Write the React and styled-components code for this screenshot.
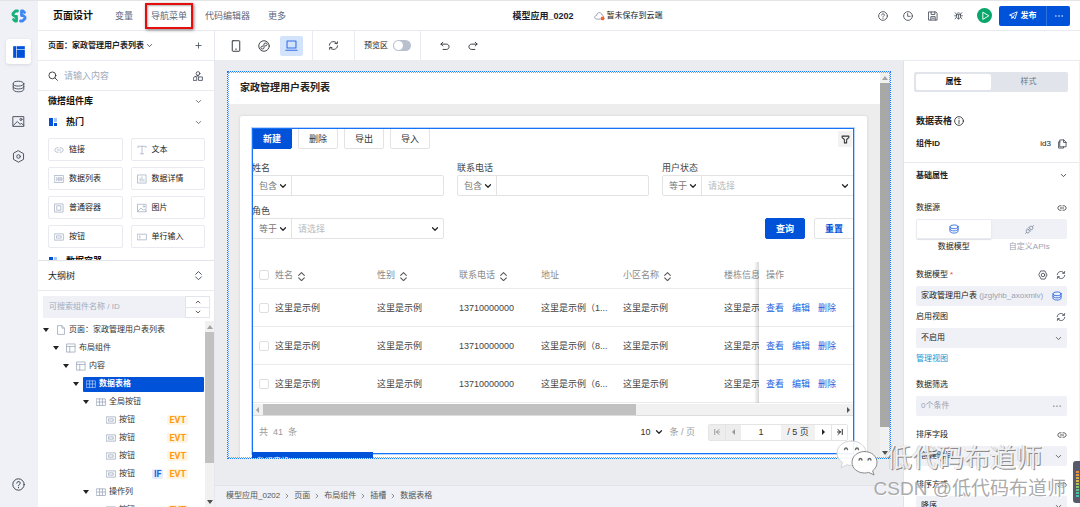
import React from 'react';
import styled, { createGlobalStyle, css } from 'styled-components';

const GlobalStyle = createGlobalStyle`
  *, *::before, *::after { box-sizing: border-box; }
  html, body { margin: 0; padding: 0; }
  body {
    font-family: "Liberation Sans", "Noto Sans CJK SC", sans-serif;
    font-size: 8px;
    line-height: 12px;
    color: #222;
    background: #fff;
    overflow: hidden;
  }
  button, input, select {
    font: inherit;
    color: inherit;
    margin: 0;
    padding: 0;
    border: 0;
    background: none;
    border-radius: 0;
    outline: none;
  }
  button { cursor: pointer; display: inline-flex; align-items: center; justify-content: center; white-space: nowrap; }
  ul, ol { list-style: none; margin: 0; padding: 0; }
  h1, h2, h3 { margin: 0; font: inherit; }
  a { color: inherit; text-decoration: none; }
`;

/* ---------- icons ---------- */

const Svg = styled.svg`
  display: block;
  flex: none;
  fill: none;
  stroke: currentColor;
  stroke-linecap: round;
  stroke-linejoin: round;
`;

const PATHS = {
  down: <path d="M3 5.500l5 5 5-5" />,
  up: <path d="M3 10.500l5-5 5 5" />,
  right: <path d="M5.500 3l5 5-5 5" />,
  plus: <path d="M8 2v12M2 8h12" />,
  search: <><circle cx="7" cy="7" r="5.500" /><path d="M11 11l4 4" /></>,
  shapes: <><circle cx="8" cy="4" r="3" /><path d="M8 7L3.500 9.500M1 10.500l2.500-2 2.500 2V15H1zM9.500 9.500H15V15H9.500zM8 7v2" /></>,
  database: <><ellipse cx="8" cy="4.500" rx="6.500" ry="3" /><path d="M1.500 4.500v3.500c0 1.700 2.900 3 6.500 3s6.500-1.300 6.500-3V4.500M1.500 8v3.500c0 1.700 2.900 3 6.500 3s6.500-1.300 6.500-3V8" /></>,
  image: <><path d="M1.500 2h13v12h-13zM1.500 13l5-5 3.500 3.500 1.500-1.500 3 3" /><circle cx="11" cy="5.500" r="1.300" /></>,
  hex: <><path d="M8 1l6.200 3.500v7L8 15l-6.200-3.500v-7z" /><circle cx="8" cy="8" r="2.200" /></>,
  help: <><circle cx="8" cy="8" r="7" /><path d="M5.800 6.300C5.900 3.700 10.200 3.800 10.200 6.200c0 1.700-2.200 1.700-2.200 3.300M8 11.500v.5" /></>,
  clock: <><circle cx="8" cy="8" r="7" /><path d="M7.500 4v4.500h4" /></>,
  save: <><path d="M1.500 1.500h11l2 2v11h-13zM5 1.500v4h6v-4M4.500 14.500V9h7v5.500M6.500 11.500h3" /></>,
  bug: <><path d="M4.500 6.500C4.500 2 11.500 2 11.500 6.500v4c0 4.700-7 4.700-7 0zM4.500 6.500h7M8 7v7M1 8.500h3.500M11.500 8.500H15M4.500 11L2 14M11.500 11l2.500 3M4.500 6L2 3M11.500 6L14 3" /></>,
  play: <path d="M4.500 2.500v11l9-5.500z" />,
  send: <path d="M1.500 7L14.500 1.500 10.500 14 7 10.500 5 13.500V9zM7 10.500l3.500-4" />,
  dots: <path d="M3 8h.01M8 8h.01M13 8h.01" />,
  phone: <><rect x="3" y="1" width="10" height="14" rx="1" /><path d="M7.500 12.200h1" /></>,
  mini: <><circle cx="8" cy="8" r="7" /><path d="M6.300 8C3 8 3 12 5.800 12 8.800 12 8 9.500 8 8s-.8-4 2.200-4C13 4 13 8 9.700 8" /></>,
  laptop: <path d="M2.500 2.500h11v8.500h-11zM1 13.800h14" />,
  refresh: <path d="M2 7.500C2.500 1.500 10.500.5 13 5M14 8.500c-.5 6-8.500 7-11 2.500M13.800 2.500L13.200 5.500l-3-.5M2.200 13.500l.6-3 3 .5" />,
  undo: <path d="M4.500 2L1.500 5l3 3M1.500 5H10c6 0 6 8.500 0 8.500H5" />,
  redo: <path d="M11.500 2l3 3-3 3M14.500 5H6c-6 0-6 8.500 0 8.500h5" />,
  info: <><circle cx="8" cy="8" r="7" /><path d="M8 7v5M8 4.200v.3" /></>,
  copy: <path d="M5 1.500h6l3.500 3.500v7.500H5zM10.500 1.500v4h4M5 4.500H2.500v10h8v-2" />,
  link: <path d="M6.500 11.500H5c-4.700 0-4.700-7 0-7h1.500M9.500 4.500H11c4.700 0 4.700 7 0 7H9.500M5.500 8h5" />,
  plug: <path d="M7 4.500l4.500 4.500 1.500-1.500c3-3-1.500-7.500-4.500-4.500zM4.500 7L9 11.500 7.500 13c-3 3-7.500-1.500-4.500-4.500zM6 8.500l2-2M8 10.500l2-2M13 3l2-2M3 13l-2 2" />,
  gear: <><path d="M5 1.500h6L14.500 8 11 14.500H5L1.500 8z" /><circle cx="8" cy="8" r="2.800" /></>,
  funnel: <path d="M2 2h12v2.500L10 8V14H6V8L2 4.500z" />,
  sort: <path d="M3 6l5-5 5 5M3 10.500l5 5 5-5" />,
  text: <path d="M1.500 4V2h13v2M8 2v12M5.500 14h5" />,
  list: <><rect x="1" y="2.500" width="14" height="11" /><path d="M3.500 6h1M3.500 8h1M3.500 10h1M7 6h5.500v4H7zM7 8h5.500" /></>,
  chart: <><rect x="1.500" y="1.500" width="13" height="13" /><path d="M5 11.500V7M8 11.500V4.500M11 11.500V8.500" /></>,
  box: <><rect x="1.500" y="1.500" width="13" height="13" /><rect x="5" y="4.500" width="6" height="7" /></>,
  button: <><rect x="1" y="3" width="14" height="10" /><rect x="4.500" y="6.200" width="7" height="3.600" /></>,
  field: <><rect x="1" y="3.500" width="14" height="9" /><path d="M4.500 6v4" /></>,
  file: <path d="M3 1h6.500L13.500 5v10H3zM9.500 1v4h4" />,
  layout: <path d="M1.500 1.500h13v13h-13zM1.500 5.500h13M6 5.500v9" />,
  grid: <path d="M1 3h14v10.500H1zM1 8h14M5.700 3v10.500M10.300 3v10.500" />,
  first: <path d="M3.500 3v10M12 3L7 8l5 5M7 8h6" />,
  last: <path d="M12.500 3v10M4 3l5 5-5 5M9 8H3" />,
};

function Icon({ name, size = 12, weight = 1.3 }) {
  return (
    <Svg width={size} height={size} viewBox="0 0 16 16" strokeWidth={weight} aria-hidden="true">
      {PATHS[name]}
    </Svg>
  );
}

const Triangle = styled.span`
  width: 0;
  height: 0;
  flex: none;
  border: 3px solid transparent;
  ${({ $dir }) =>
    ({
      down: css`border-width: 4px 3px 0; border-top-color: currentColor;`,
      up: css`border-width: 0 3px 4px; border-bottom-color: currentColor;`,
      left: css`border-width: 3px 3px 3px 0; border-right-color: currentColor;`,
      right: css`border-width: 3px 0 3px 3px; border-left-color: currentColor;`,
    })[$dir]}
`;

/* ---------- shell ---------- */

const Shell = styled.div`
  position: relative;
  display: flex;
  height: 100vh;
  border-top: 1px solid #e4e4e6;
  overflow: hidden;
`;

const Rail = styled.nav`
  flex: 0 0 38px;
  display: flex;
  flex-direction: column;
  align-items: center;
  background: #eff1f6;
  color: #4b5260;
  padding: 7px 1px 12px 0;
`;

const RailButton = styled.button`
  width: 25px;
  height: 25px;
  margin-top: 10px;
  border-radius: 3px;
  ${({ $active }) => $active && css`
    margin: 15px 0 0;
    background: #fff;
    color: #0052d9;
    box-shadow: 0 1px 3px rgba(30, 50, 90, 0.12);
  `}
`;

const RailEnd = styled.div`margin-top: auto;`;

const Main = styled.div`
  flex: 1;
  min-width: 0;
  display: flex;
  flex-direction: column;
`;

const Header = styled.header`
  flex: 0 0 30px;
  display: flex;
  align-items: center;
  justify-content: space-between;
  padding: 0 10px 0 15px;
  border-bottom: 1px solid #e9ebf0;
  font-size: 9px;
`;

const HeaderGroup = styled.div`
  flex: 1;
  display: flex;
  align-items: center;
  justify-content: ${({ $align }) => $align || 'flex-start'};
  gap: ${({ $gap }) => $gap}px;
  padding-left: ${({ $align }) => ($align === 'center' ? '52px' : '0')};
  white-space: nowrap;
`;

const PageName = styled.h1`
  font-size: 10px;
  font-weight: 700;
  margin-right: 4px;
  color: #111;
`;

const NavButton = styled.button`
  position: relative;
  color: #596780;
  ${({ $marked }) => $marked && css`
    &::after {
      content: '';
      position: absolute;
      inset: -7px -6px;
      border: 2px solid #e60d0d;
      box-shadow: 1px 1px 3px rgba(0, 0, 0, 0.5), inset 1px 1px 2px rgba(0, 0, 0, 0.3);
    }
  `}
`;

const AppName = styled.strong`color: #1c1c2b;`;

const SaveState = styled.span`
  display: flex;
  align-items: center;
  gap: 2px;
  font-size: 8px;
`;

const IconButton = styled.button`
  flex: none;
  width: ${({ $w }) => $w || 12}px;
  height: ${({ $h }) => $h || 12}px;
  color: ${({ $color }) => $color || '#3c4350'};
`;

const PlayButton = styled(IconButton)`
  width: 15px;
  height: 15px;
  border-radius: 50%;
  background: #07a76b;
  color: #fff;
`;

const Publish = styled.div`
  display: flex;
  height: 20px;
  margin-left: -6px;
  border-radius: 2px;
  background: #0052d9;
  color: #fff;
  font-size: 8px;
  font-weight: 700;
`;

const PublishMain = styled.button`
  width: 48px;
  gap: 3px;
  border-right: 1px solid #2f72e2;
`;

const PublishMore = styled.button`width: 23px;`;

const Body = styled.div`
  flex: 1;
  min-height: 0;
  display: flex;
`;

/* ---------- left panel ---------- */

const Side = styled.aside`
  flex: 0 0 177px;
  display: flex;
  flex-direction: column;
  min-height: 0;
  border-right: 1px solid #e6e8ee;
`;

const SideRow = styled.div`
  flex: 0 0 ${({ $h }) => $h}px;
  display: flex;
  align-items: center;
  justify-content: space-between;
  gap: 6px;
  padding: 0 10px;
  border-bottom: ${({ $line }) => ($line ? '1px solid #e9ebf0' : '0')};
  font-size: ${({ $size }) => $size || 9}px;
  font-weight: ${({ $bold }) => ($bold ? 700 : 400)};
  height: ${({ $h }) => $h}px;
`;

const PageSelect = styled.button`gap: 2px; font-weight: 700;`;

const SearchInput = styled.input`
  flex: 1;
  min-width: 0;
  &::placeholder { color: #a2abbd; opacity: 1; }
`;

const Library = styled.section`
  flex: 0 1 169px;
  overflow: hidden;
`;

const GroupTitle = styled.span`
  display: flex;
  align-items: center;
  gap: 8px;
  color: #111;
`;

const Tiles = styled.div`
  display: grid;
  grid-template-columns: 1fr 1fr;
  gap: 6px 8px;
  padding: 5px 9px 2px 10px;
`;

const Tile = styled.button`
  height: 23px;
  justify-content: flex-start;
  gap: 5px;
  padding-left: 5px;
  border: 1px solid #e8eaf0;
  border-radius: 2px;
  svg { color: #a9b3c6; }
`;

const Outline = styled.section`
  flex: 1;
  min-height: 0;
  display: flex;
  flex-direction: column;
  border-top: 1px solid #e2e4ea;
`;

const OutlineSearch = styled.div`
  flex: none;
  display: flex;
  height: 22px;
  margin: 5px 4px 3px 5px;
  background: #eff1f6;
`;

const OutlineInput = styled(SearchInput)`padding-left: 6px;`;

const Stepper = styled.div`
  width: 25px;
  display: flex;
  flex-direction: column;
  background: #fff;
`;

const StepButton = styled.button`
  flex: 1;
  border: 1px solid #e2e5eb;
  & + & { border-top: 0; }
`;

const TreeArea = styled.div`
  flex: 1;
  min-height: 0;
  display: flex;
  overflow: hidden;
`;

const Tree = styled.ul`
  flex: 1;
  min-width: 0;
  padding-right: 1px;
`;

const TreeItem = styled.li`
  display: flex;
  align-items: center;
  height: 18px;
  gap: 3px;
  padding-left: ${({ $level }) => 4 + $level * 10}px;
`;

const Caret = styled.span`
  width: 8px;
  flex: none;
  display: flex;
  justify-content: center;
  color: #222;
`;

const TreeLabel = styled.button`
  flex: 1;
  height: 15px;
  justify-content: flex-start;
  gap: 3px;
  padding-left: 3px;
  color: #333;
  svg { color: #98a3b8; }
  ${({ $selected }) => $selected && css`
    background: #0052d9;
    color: #fff;
    font-weight: 700;
    border-radius: 1px;
    svg { color: #a9c6fa; }
  `}
`;

const Tags = styled.span`
  display: flex;
  gap: 4px;
  margin-left: auto;
  padding-right: 16px;
  font: 700 9px/10px Roboto, sans-serif;
`;

const Tag = styled.span`
  padding: 0 2px;
  border-radius: 2px;
  color: ${({ $blue }) => ($blue ? '#2260dd' : '#ff9a14')};
  background: ${({ $blue }) => ($blue ? '#e3edff' : '#fff3e2')};
`;

/* ---------- scrollbars ---------- */

const VBar = styled.div`
  flex: 0 0 ${({ $w }) => $w || 10}px;
  display: flex;
  flex-direction: column;
  align-items: center;
  background: #f1f1f1;
  color: #505050;
`;

const BarEnd = styled.span`
  flex: 0 0 11px;
  display: flex;
  align-items: center;
  justify-content: center;
  color: ${({ $muted }) => ($muted ? '#a3a3a3' : '#505050')};
`;

const Thumb = styled.span`
  align-self: stretch;
  flex: ${({ $flex }) => $flex};
  background: ${({ $color }) => $color || '#c1c1c1'};
`;

const Spacer = styled.span`flex: ${({ $flex }) => $flex || 1};`;

/* ---------- work area ---------- */

const Work = styled.div`
  flex: 1;
  min-width: 0;
  display: flex;
  flex-direction: column;
`;

const Toolbar = styled.div`
  flex: 0 0 30px;
  display: flex;
  border-bottom: 1px solid #e9ebf0;
`;

const ToolGroup = styled.div`
  display: flex;
  align-items: center;
  gap: 5px;
  padding: 0 ${({ $last }) => ($last ? 12 : 9)}px;
  border-right: ${({ $last }) => ($last ? '0' : '1px solid #e9ebf0')};
`;

const ToolButton = styled.button`
  width: 23px;
  height: 20px;
  border-radius: 2px;
  color: ${({ $active }) => ($active ? '#2f6fe4' : '#30343b')};
  background: ${({ $active }) => ($active ? '#d4e3fc' : 'none')};
`;

const PreviewLabel = styled.label`
  display: flex;
  align-items: center;
  gap: 5px;
`;

const Toggle = styled.input`
  appearance: none;
  width: 18px;
  height: 11px;
  border-radius: 6px;
  background: #b9c1cf;
  padding: 1px;
  &::before {
    content: '';
    display: block;
    width: 9px;
    height: 9px;
    border-radius: 50%;
    background: #fff;
  }
`;

const Stage = styled.div`
  flex: 1;
  min-height: 0;
  display: flex;
`;

const CanvasColumn = styled.main`
  flex: 1;
  min-width: 0;
  display: flex;
  flex-direction: column;
  background: #ebecf0;
`;

const Frame = styled.div`
  flex: 1;
  min-height: 0;
  display: flex;
  margin: 10px 12px 26px;
  border: 1px dotted #1677ff;
  outline: 1px dotted #6aa9ff;
  outline-offset: -2px;
`;

const PageView = styled.div`
  flex: 1;
  min-width: 0;
  overflow: hidden;
  background: #ededee;
`;

const PageTitle = styled.h2`
  display: flex;
  align-items: center;
  height: 32px;
  padding-left: 12px;
  background: #fff;
  font-size: 10px;
  font-weight: 700;
`;

const Card = styled.section`
  margin: 12px 13px 0 12px;
  padding: 12px 13px 40px 12px;
  background: #fff;
  border-radius: 2px;
  box-shadow: 0 0 3px rgba(0, 0, 0, 0.12);
`;

const Selection = styled.div`
  position: relative;
  padding-bottom: 6px;
  font-size: 9px;
  color: #444;
  &::after {
    content: '';
    position: absolute;
    inset: 0;
    border: 1px solid #1673f5;
    box-shadow: 0 0 0 1px rgba(22, 115, 245, 0.3);
    pointer-events: none;
  }
`;

const SelectionTab = styled.div`
  position: absolute;
  z-index: 1;
  top: calc(100% - 2px);
  left: 0;
  display: flex;
  align-items: center;
  gap: 8px;
  width: 121px;
  height: 20px;
  padding: 0 6px 0 5px;
  background: #0052d9;
  color: #fff;
  font-size: 8px;
`;

const Actions = styled.div`
  display: flex;
  align-items: flex-start;
  gap: 6px;
  height: 21px;
  margin-bottom: 12px;
`;

const Button = styled.button`
  width: 40px;
  height: 21px;
  border: 1px solid ${({ $primary }) => ($primary ? '#0052d9' : '#e3e3e3')};
  border-radius: 2px;
  background: ${({ $primary }) => ($primary ? '#0052d9' : '#fff')};
  color: ${({ $primary, $link }) => ($primary ? '#fff' : $link ? '#0052d9' : '#333')};
  font-weight: ${({ $primary, $link }) => ($primary || $link ? 700 : 400)};
`;

const FilterButton = styled.button`
  width: 14px;
  height: 16px;
  margin: 3px 2px 0 auto;
  background: #f2f2f2;
  color: #333;
`;

const Filters = styled.form`
  display: grid;
  grid-template-columns: repeat(3, minmax(0, 1fr));
  gap: 8px 13px;
  margin-bottom: 23px;
`;

const Field = styled.div`
  display: flex;
  flex-direction: column;
`;

const FieldLabel = styled.label`
  height: 14px;
  line-height: 14px;
`;

const FieldControl = styled.div`
  display: flex;
  height: 21px;
  border: 1px solid #e3e3e3;
  border-radius: 2px;
`;

const SelectBox = styled.div`
  display: flex;
  align-items: center;
  min-width: 0;
  flex: ${({ $w }) => ($w ? `0 0 ${$w}px` : 1)};
  padding-right: 4px;
  color: ${({ $muted }) => ($muted ? '#bbb' : '#777')};
  & + & , & + input { border-left: 1px solid #e3e3e3; }
  svg { color: #222; }
`;

const NativeSelect = styled.select`
  appearance: none;
  flex: 1;
  min-width: 0;
  height: 100%;
  padding-left: 6px;
`;

const ValueInput = styled.input`flex: 1; min-width: 0; padding: 0 6px;`;

const FilterActions = styled.div`
  grid-column: 2 / 4;
  display: flex;
  align-items: flex-end;
  justify-content: flex-end;
  gap: 9px;
`;

const DataTable = styled.table`
  width: 100%;
  table-layout: fixed;
  border-collapse: separate;
  border-spacing: 0;
  margin-bottom: 1px;
`;

const Col = styled.col`width: ${({ $w }) => ($w ? `${$w}px` : 'auto')};`;

const cell = css`
  padding: 0;
  text-align: left;
  font-weight: 400;
  white-space: nowrap;
  border-bottom: 1px solid #ebebeb;
  overflow: ${({ $fixed }) => ($fixed ? 'visible' : 'hidden')};
  ${({ $fixed }) => $fixed && css`
    position: relative;
    padding-left: 7px;
    background: #fff;
    &::before {
      content: '';
      position: absolute;
      top: 0;
      bottom: -1px;
      left: -5px;
      width: 5px;
      background: linear-gradient(to right, rgba(0, 0, 0, 0), rgba(0, 0, 0, 0.16));
    }
  `}
`;

const Th = styled.th`${cell} height: 27px; color: #8a8a8a;`;
const Td = styled.td`${cell} height: 38px;`;

const SortButton = styled.button`gap: 4px; svg { color: #555; margin-top: 3px; }`;

const CheckBox = styled.input`
  appearance: none;
  display: block;
  width: 10px;
  height: 10px;
  margin-left: 7px;
  border: 1px solid #dedede;
  border-radius: 2px;
`;

const RowLink = styled.a`
  display: inline-block;
  color: #1a5fe0;
  & + & { margin-left: 8px; }
`;

const RowLinks = styled.div`display: flex;`;

const HBar = styled.div`
  display: flex;
  height: 12px;
  border-bottom: 1px solid #ddd;
  background: #f1f1f1;
`;

const PagerRow = styled.div`
  display: flex;
  align-items: center;
  height: 32px;
  padding: 0 6px 0 7px;
  color: #999;
`;

const PageSize = styled(SelectBox)`
  flex: 0 0 29px;
  margin-left: auto;
  color: #333;
  padding-right: 6px;
  ${NativeSelect} { padding-left: 0; }
`;

const Pager = styled.div`
  display: flex;
  height: 17px;
  margin-left: 13px;
  border: 1px solid #e4e4e4;
  border-radius: 2px;
  color: #333;
`;

const PagerButton = styled.button`
  width: 16px;
  background: ${({ disabled }) => (disabled ? '#ededed' : '#fff')};
  color: ${({ disabled }) => (disabled ? '#999' : '#222')};
  & + & { border-left: 1px solid #e4e4e4; }
`;

const PagerInput = styled.input`width: 40px; text-align: center;`;

const PagerTotal = styled.span`
  width: 34px;
  line-height: 15px;
  text-align: center;
  background: #f1f1f1;
`;

const Crumbs = styled.nav`
  flex: 0 0 22px;
  display: flex;
  align-items: center;
  gap: 4px;
  padding: 0 11px 2px;
  border-top: 1px solid #e2e4e9;
  background: #eff1f6;
  color: #555;
`;

/* ---------- properties panel ---------- */

const Props = styled.aside`
  flex: 0 0 177px;
  min-height: 0;
  overflow: hidden;
  padding: 11px 12px 0;
  border-left: 1px solid #dfe2e8;
  border-right: 1px solid #edeff2;
`;

const Segment = styled.div`
  display: flex;
  height: 20px;
  padding: ${({ $tabs }) => ($tabs ? '2px' : '0')};
  margin: ${({ $tabs }) => ($tabs ? '0 -1px 18px -2px' : '1px 0 0')};
  border-radius: 2px;
  background: ${({ $tabs }) => ($tabs ? '#e1e4ea' : '#eff1f6')};
`;

const SegmentButton = styled.button`
  flex: 1;
  border-radius: 2px;
  color: ${({ $icon, $active }) => ($icon && $active ? '#2260dd' : $active ? '#111' : '#6b778c')};
  font-weight: ${({ $active }) => ($active ? 700 : 400)};
  background: ${({ $active }) => ($active ? '#fff' : 'none')};
  box-shadow: ${({ $active, $icon }) => ($active && $icon ? '0 0 0 1px #e9ebf1 inset, 0 1px 1px #dde1e8' : 'none')};
`;

const SegmentCaptions = styled.div`
  display: flex;
  height: 16px;
  line-height: 16px;
  text-align: center;
`;

const Caption = styled.span`flex: 1; color: ${({ $muted }) => ($muted ? '#98a2b5' : '#222')};`;

const PropRow = styled.div`
  display: flex;
  align-items: center;
  gap: ${({ $gap }) => $gap || 6}px;
  height: ${({ $h }) => $h || 20}px;
  margin-top: ${({ $mt }) => $mt || 0}px;
  font-size: ${({ $size }) => $size || 8}px;
  font-weight: ${({ $bold }) => ($bold ? 700 : 400)};
`;

const PropLabel = styled.label`margin-right: auto;`;

const Required = styled.span`color: #e34d59; margin-left: 2px;`;

const Divider = styled.hr`
  height: 1px;
  margin: 6px -12px 0;
  border: 0;
  background: #e9ebf0;
`;

const PropBox = styled.div`
  display: flex;
  align-items: center;
  height: 20px;
  margin-top: 1px;
  padding: 0 5px;
  border-radius: 2px;
  background: #eff1f6;
  color: ${({ $muted }) => ($muted ? '#98a2b5' : '#222')};
  svg { color: ${({ $accent }) => ($accent ? '#2260dd' : '#444')}; }
`;

const BoxText = styled.span`flex: 1; white-space: nowrap; em { font-style: normal; color: #98a2b5; }`;

const PropSelect = styled(NativeSelect)`padding: 0;`;

const TextLink = styled.a`color: #1795d4;`;

/* ---------- overlays ---------- */

const Watermark = styled.div`
  position: absolute;
  right: 14px;
  bottom: 4px;
  display: flex;
  flex-direction: column;
  align-items: flex-end;
  color: rgba(252, 252, 252, 0.85);
  text-shadow: 1px 1px 0 rgba(80, 80, 80, 0.65), -1px 0 0 rgba(150, 150, 150, 0.35);
  pointer-events: none;
  white-space: nowrap;
`;

const WatermarkName = styled.div`
  display: flex;
  align-items: center;
  gap: 8px;
  height: 34px;
  margin-right: 24px;
  font-size: 26px;
  line-height: 34px;
`;

const WatermarkSite = styled.div`
  font-size: 19px;
  line-height: 28px;
  color: rgba(160, 160, 160, 0.9);
  text-shadow: 1px 1px 0 rgba(255, 255, 255, 0.8);
`;

const Meter = styled.div`
  position: absolute;
  right: 0;
  bottom: 4px;
  width: 7px;
  height: 42px;
  padding: 10px 1px 5px 3px;
  border-radius: 3px 0 0 3px;
  background: #565a6a;
  &::before {
    content: '';
    display: block;
    height: 100%;
    background:
      repeating-linear-gradient(to bottom, transparent 0 2px, #565a6a 2px 3px),
      linear-gradient(to bottom, #f08a3c, #d8c04a 40%, #49c98a 75%, #3fc0c0);
  }
`;

/* ---------- data ---------- */

const tiles = [
  ['link', '链接'], ['text', '文本'],
  ['list', '数据列表'], ['chart', '数据详情'],
  ['box', '普通容器'], ['image', '图片'],
  ['button', '按钮'], ['field', '单行输入'],
];

const tree = [
  { level: 0, icon: 'file', label: '页面：家政管理用户表列表', open: true },
  { level: 1, icon: 'layout', label: '布局组件', open: true },
  { level: 2, icon: 'layout', label: '内容', open: true },
  { level: 3, icon: 'grid', label: '数据表格', open: true, selected: true },
  { level: 4, icon: 'grid', label: '全局按钮', open: true },
  { level: 5, icon: 'button', label: '按钮', evt: true },
  { level: 5, icon: 'button', label: '按钮', evt: true },
  { level: 5, icon: 'button', label: '按钮', evt: true },
  { level: 5, icon: 'button', label: '按钮', evt: true, cond: true },
  { level: 4, icon: 'grid', label: '操作列', open: true },
  { level: 5, icon: 'button', label: '按钮', evt: true },
];

const columns = [
  { label: '姓名', width: 102, sort: true },
  { label: '性别', width: 82, sort: true },
  { label: '联系电话', width: 82, sort: true },
  { label: '地址', width: 82 },
  { label: '小区名称', width: 101, sort: true },
  { label: '楼栋信息' },
];

const sample = '这里是示例';
const rows = ['1', '8', '6'].map((n) => [sample, sample, '13710000000', `${sample}（${n}...`, sample, sample]);

/* ---------- parts ---------- */

function LogoMark() {
  return (
    <Svg width="16" height="16" viewBox="0 0 16 16" strokeWidth="2.800" strokeLinejoin="round" aria-label="微搭">
      <path d="M6.500 3H4.500L2 5.500V7l2 1.500h1.500M2.500 11.500L4 13h1.500V8.500" stroke="#18b07b" />
      <path d="M13.500 4.500L12 3h-1.500v4.500M10.500 7.500H12L14 9v1.500L11.500 13h-2" stroke="#3f86f6" />
    </Svg>
  );
}

function CloudIcon() {
  return (
    <Svg width="11" height="10" viewBox="0 0 16 14" strokeWidth="1.200" aria-hidden="true">
      <path d="M9 11.500H4C-.2 11.300.2 6.500 3.800 6.200 4 .8 11.200.8 11.500 5.500c1.800.3 2.500 1.500 2.500 2.500" stroke="#8792a8" />
      <circle cx="12.500" cy="10.500" r="2.800" fill="#f0642d" stroke="none" />
    </Svg>
  );
}

function BlocksIcon({ size }) {
  return (
    <Svg width={size} height={size} viewBox="0 0 12 12" aria-hidden="true">
      <g stroke="none" fill="#0052d9">
        <rect x="1" y="1" width="2.500" height="10" />
        <rect x="4" y="1" width="7" height="2.500" />
        <rect x="4" y="4" width="7" height="7" />
      </g>
    </Svg>
  );
}

function HotIcon() {
  return (
    <Svg width="10" height="10" viewBox="0 0 10 10" aria-hidden="true">
      <g stroke="none" fill="#0052d9">
        <rect x="1" y="1" width="4" height="8" />
        <rect x="6" y="1" width="3" height="4" fill="#a8c6fa" />
        <rect x="6" y="6" width="3" height="3" />
      </g>
    </Svg>
  );
}

function WechatMark() {
  return (
    <Svg width="42" height="36" viewBox="0 0 42 36" strokeWidth="1" aria-hidden="true">
      <g stroke="#8a8a8a" fill="rgba(255,255,255,0.92)">
        <path d="M15.500 1C7.200 1 1 6.400 1 13.200c0 3.800 2 7 5.400 9.300L5 28l5.500-3.200c1.600.4 3.300.6 5 .6C24 25.400 30 20 30 13.200S24 1 15.500 1z" stroke="#d4d4d4" />
        <path d="M28.500 11.500c-7 0-12.500 4.800-12.500 10.800S21.500 33 28.500 33c1.500 0 2.900-.2 4.200-.6L38 35l-1.400-4.200c2.800-2 4.400-5 4.400-8.500 0-6-5.500-10.800-12.500-10.800z" />
      </g>
      <g stroke="#666" strokeWidth="1.400">
        <path d="M8.500 9.500c.5-2 2.500-2 3 0M19.500 9.500c.5-2 2.500-2 3 0M23 20c.5-2 2.500-2 3 0M32 20c.5-2 2.500-2 3 0" />
      </g>
    </Svg>
  );
}

function FilterField({ id, label, op, select }) {
  return (
    <Field>
      <FieldLabel htmlFor={id}>{label}</FieldLabel>
      <FieldControl>
        <SelectBox $w={38}>
          <NativeSelect aria-label={`${label}条件`}><option>{op}</option></NativeSelect>
          <Icon name="down" size={8} weight={2.4} />
        </SelectBox>
        {select ? (
          <SelectBox $muted>
            <NativeSelect id={id}><option>请选择</option></NativeSelect>
            <Icon name="down" size={8} weight={2.4} />
          </SelectBox>
        ) : (
          <ValueInput id={id} type="text" />
        )}
      </FieldControl>
    </Field>
  );
}

function LeftPanel() {
  return (
    <Side>
      <SideRow $h={30} $line $size={8}>
        <PageSelect>页面：家政管理用户表列表<Icon name="down" size={7} weight={1.6} /></PageSelect>
        <IconButton aria-label="新建页面"><Icon name="plus" size={7} weight={1.8} /></IconButton>
      </SideRow>
      <SideRow $h={30} $line>
        <Icon name="search" size={10} />
        <SearchInput aria-label="搜索组件" placeholder="请输入内容" />
        <IconButton aria-label="组件市场"><Icon name="shapes" size={10} /></IconButton>
      </SideRow>
      <Library>
        <SideRow $h={20} $bold><GroupTitle>微搭组件库</GroupTitle><IconButton aria-label="收起"><Icon name="down" size={7} weight={1.6} /></IconButton></SideRow>
        <SideRow $h={22} $bold><GroupTitle><HotIcon />热门</GroupTitle><IconButton aria-label="收起"><Icon name="down" size={7} weight={1.6} /></IconButton></SideRow>
        <Tiles>
          {tiles.map(([icon, label]) => (
            <Tile key={label}><Icon name={icon} size={10} />{label}</Tile>
          ))}
        </Tiles>
        <SideRow $h={22} $bold><GroupTitle><HotIcon />数据容器</GroupTitle></SideRow>
      </Library>
      <Outline>
        <SideRow $h={30} $line>
          大纲树
          <IconButton aria-label="展开"><Icon name="sort" size={9} weight={1.6} /></IconButton>
        </SideRow>
        <OutlineSearch>
          <OutlineInput aria-label="搜索大纲" placeholder="可搜索组件名称 / ID" />
          <Stepper>
            <StepButton aria-label="上一个"><Icon name="up" size={6} weight={2} /></StepButton>
            <StepButton aria-label="下一个"><Icon name="down" size={6} weight={2} /></StepButton>
          </Stepper>
        </OutlineSearch>
        <TreeArea>
          <Tree>
            {tree.map((n, i) => (
              <TreeItem key={i} $level={n.level}>
                <Caret>{n.open && <Triangle $dir="down" />}</Caret>
                <TreeLabel $selected={n.selected}>
                  <Icon name={n.icon} size={10} weight={1.2} />
                  {n.label}
                  {n.evt && <Tags>{n.cond && <Tag $blue>IF</Tag>}<Tag>EVT</Tag></Tags>}
                </TreeLabel>
              </TreeItem>
            ))}
          </Tree>
          <VBar $w={9}>
            <BarEnd $muted><Triangle $dir="up" /></BarEnd>
            <Thumb $flex={4} />
            <Spacer />
            <BarEnd><Triangle $dir="down" /></BarEnd>
          </VBar>
        </TreeArea>
      </Outline>
    </Side>
  );
}

function TablePage() {
  return (
    <Selection>
      <Actions>
        <Button $primary>新建</Button>
        <Button>删除</Button>
        <Button>导出</Button>
        <Button>导入</Button>
        <FilterButton aria-label="筛选"><Icon name="funnel" size={9} weight={1.8} /></FilterButton>
      </Actions>
      <Filters onSubmit={(e) => e.preventDefault()}>
        <FilterField id="f-name" label="姓名" op="包含" />
        <FilterField id="f-phone" label="联系电话" op="包含" />
        <FilterField id="f-status" label="用户状态" op="等于" select />
        <FilterField id="f-role" label="角色" op="等于" select />
        <FilterActions>
          <Button type="submit" $primary>查询</Button>
          <Button type="reset" $link>重置</Button>
        </FilterActions>
      </Filters>
      <DataTable>
        <colgroup>
          <Col $w={23} />
          {columns.map((c) => <Col key={c.label} $w={c.width} />)}
          <Col $w={95} />
        </colgroup>
        <thead>
          <tr>
            <Th><CheckBox type="checkbox" aria-label="全选" /></Th>
            {columns.map((c) => (
              <Th key={c.label}>
                {c.sort ? <SortButton>{c.label}<Icon name="sort" size={9} weight={1.8} /></SortButton> : c.label}
              </Th>
            ))}
            <Th $fixed>操作</Th>
          </tr>
        </thead>
        <tbody>
          {rows.map((r, i) => (
            <tr key={i}>
              <Td><CheckBox type="checkbox" aria-label={`选择第${i + 1}行`} /></Td>
              {r.map((v, j) => <Td key={j}>{v}</Td>)}
              <Td $fixed>
                <RowLinks>
                  <RowLink href="#view">查看</RowLink>
                  <RowLink href="#edit">编辑</RowLink>
                  <RowLink href="#delete">删除</RowLink>
                </RowLinks>
              </Td>
            </tr>
          ))}
        </tbody>
      </DataTable>
      <HBar>
        <BarEnd $muted><Triangle $dir="left" /></BarEnd>
        <Thumb $flex={9} />
        <Spacer $flex={5} />
        <BarEnd><Triangle $dir="right" /></BarEnd>
      </HBar>
      <PagerRow>
        共&nbsp; 41 &nbsp;条
        <PageSize as="div">
          <NativeSelect aria-label="每页条数"><option>10</option></NativeSelect>
          <Icon name="down" size={8} weight={2.4} />
        </PageSize>
        条 / 页
        <Pager>
          <PagerButton disabled aria-label="首页"><Icon name="first" size={8} weight={2} /></PagerButton>
          <PagerButton disabled aria-label="上一页"><Triangle $dir="left" /></PagerButton>
          <PagerInput aria-label="页码" defaultValue="1" />
          <PagerTotal>/ 5 页</PagerTotal>
          <PagerButton aria-label="下一页"><Triangle $dir="right" /></PagerButton>
          <PagerButton aria-label="末页"><Icon name="last" size={8} weight={2} /></PagerButton>
        </Pager>
      </PagerRow>
      <SelectionTab>数据表格<Spacer /><Icon name="up" size={8} /><Icon name="copy" size={8} /><Icon name="database" size={8} /><Icon name="hex" size={8} /></SelectionTab>
    </Selection>
  );
}

function PropertiesPanel() {
  return (
    <Props>
      <Segment $tabs>
        <SegmentButton $active>属性</SegmentButton>
        <SegmentButton>样式</SegmentButton>
      </Segment>
      <PropRow $h={22} $gap={2} $size={9} $bold>数据表格<Icon name="info" size={10} /></PropRow>
      <PropRow $h={24}><PropLabel as="strong">组件ID</PropLabel>id3<IconButton $w={10} aria-label="复制"><Icon name="copy" size={10} /></IconButton></PropRow>
      <Divider />
      <PropRow $h={25} $bold><PropLabel as="h3">基础属性</PropLabel><Icon name="down" size={7} weight={1.8} /></PropRow>
      <PropRow $mt={10}><PropLabel as="span">数据源</PropLabel><Icon name="link" size={10} weight={1.2} /></PropRow>
      <Segment>
        <SegmentButton $active $icon aria-label="数据模型"><Icon name="database" size={10} /></SegmentButton>
        <SegmentButton $icon aria-label="自定义APIs"><Icon name="plug" size={9} /></SegmentButton>
      </Segment>
      <SegmentCaptions><Caption>数据模型</Caption><Caption $muted>自定义APIs</Caption></SegmentCaptions>
      <PropRow $mt={10}>
        <PropLabel as="span">数据模型<Required>*</Required></PropLabel>
        <IconButton aria-label="设置"><Icon name="gear" size={10} /></IconButton>
        <IconButton aria-label="刷新"><Icon name="refresh" size={10} /></IconButton>
      </PropRow>
      <PropBox $accent><BoxText>家政管理用户表 <em>(jzglyhb_axoxmlv)</em></BoxText><Icon name="database" size={10} /></PropBox>
      <PropRow $mt={1}>
        <PropLabel htmlFor="p-view">启用视图</PropLabel>
        <IconButton aria-label="刷新视图"><Icon name="refresh" size={10} /></IconButton>
      </PropRow>
      <PropBox><PropSelect id="p-view"><option>不启用</option></PropSelect><Icon name="down" size={7} weight={1.8} /></PropBox>
      <PropRow $h={22}><TextLink href="#views">管理视图</TextLink></PropRow>
      <PropRow $mt={5}>数据筛选</PropRow>
      <PropBox $muted><BoxText>0个条件</BoxText><Icon name="dots" size={10} weight={2} /></PropBox>
      <PropRow $mt={9}><PropLabel htmlFor="p-sort">排序字段</PropLabel><Icon name="link" size={10} weight={1.2} /></PropRow>
      <PropBox><PropSelect id="p-sort"><option>创建时间</option></PropSelect><Icon name="down" size={7} weight={1.8} /></PropBox>
      <PropRow $mt={9}><PropLabel htmlFor="p-order">排序方式</PropLabel><Icon name="link" size={10} weight={1.2} /></PropRow>
      <PropBox><PropSelect id="p-order"><option>降序</option></PropSelect><Icon name="down" size={7} weight={1.8} /></PropBox>
    </Props>
  );
}

const crumbs = ['模型应用_0202', '页面', '布局组件', '插槽', '数据表格'];

export default function App() {
  return (
    <>
      <GlobalStyle />
      <Shell>
        <Rail>
          <LogoMark />
          <RailButton $active aria-label="页面设计"><BlocksIcon size={14} /></RailButton>
          <RailButton aria-label="数据"><Icon name="database" size={13} weight={1.2} /></RailButton>
          <RailButton aria-label="素材"><Icon name="image" size={13} weight={1.2} /></RailButton>
          <RailButton aria-label="设置"><Icon name="hex" size={13} weight={1.2} /></RailButton>
          <RailEnd><IconButton aria-label="帮助"><Icon name="help" size={13} weight={1.2} /></IconButton></RailEnd>
        </Rail>
        <Main>
          <Header>
            <HeaderGroup $gap={18}>
              <PageName>页面设计</PageName>
              <NavButton>变量</NavButton>
              <NavButton $marked>导航菜单</NavButton>
              <NavButton>代码编辑器</NavButton>
              <NavButton>更多</NavButton>
            </HeaderGroup>
            <HeaderGroup $gap={20} $align="center">
              <AppName>模型应用_0202</AppName>
              <SaveState><CloudIcon />暂未保存到云端</SaveState>
            </HeaderGroup>
            <HeaderGroup $gap={13} $align="flex-end">
              <IconButton aria-label="帮助"><Icon name="help" size={10} /></IconButton>
              <IconButton aria-label="历史"><Icon name="clock" size={10} /></IconButton>
              <IconButton aria-label="保存"><Icon name="save" size={10} /></IconButton>
              <IconButton aria-label="调试"><Icon name="bug" size={9} weight={1.3} /></IconButton>
              <PlayButton aria-label="预览"><Icon name="play" size={10} weight={1.5} /></PlayButton>
              <Publish>
                <PublishMain><Icon name="send" size={9} weight={1.6} />发布</PublishMain>
                <PublishMore aria-label="更多"><Icon name="dots" size={10} weight={2.4} /></PublishMore>
              </Publish>
            </HeaderGroup>
          </Header>
          <Body>
            <LeftPanel />
            <Work>
              <Toolbar>
                <ToolGroup>
                  <ToolButton aria-label="手机"><Icon name="phone" size={12} /></ToolButton>
                  <ToolButton aria-label="小程序"><Icon name="mini" size={12} weight={1.2} /></ToolButton>
                  <ToolButton $active aria-label="电脑"><Icon name="laptop" size={13} /></ToolButton>
                </ToolGroup>
                <ToolGroup><ToolButton aria-label="刷新"><Icon name="refresh" size={11} /></ToolButton></ToolGroup>
                <ToolGroup>
                  <PreviewLabel>预览区<Toggle type="checkbox" /></PreviewLabel>
                </ToolGroup>
                <ToolGroup $last>
                  <ToolButton aria-label="撤销"><Icon name="undo" size={10} weight={1.5} /></ToolButton>
                  <ToolButton aria-label="重做"><Icon name="redo" size={10} weight={1.5} /></ToolButton>
                </ToolGroup>
              </Toolbar>
              <Stage>
                <CanvasColumn>
                  <Frame>
                    <PageView>
                      <PageTitle>家政管理用户表列表</PageTitle>
                      <Card><TablePage /></Card>
                    </PageView>
                    <VBar>
                      <BarEnd $muted><Triangle $dir="up" /></BarEnd>
                      <Thumb $flex={17} $color="#a8a8a8" />
                      <Spacer />
                      <BarEnd><Triangle $dir="down" /></BarEnd>
                    </VBar>
                  </Frame>
                  <Crumbs aria-label="路径">
                    {crumbs.map((c, i) => (
                      <React.Fragment key={c}>
                        {i > 0 && <Icon name="right" size={6} weight={1.8} />}
                        <a href="#crumb">{c}</a>
                      </React.Fragment>
                    ))}
                  </Crumbs>
                </CanvasColumn>
                <PropertiesPanel />
              </Stage>
            </Work>
          </Body>
        </Main>
        <Watermark>
          <WatermarkName><WechatMark />低代码布道师</WatermarkName>
          <WatermarkSite>CSDN @低代码布道师</WatermarkSite>
        </Watermark>
        <Meter />
      </Shell>
    </>
  );
}
